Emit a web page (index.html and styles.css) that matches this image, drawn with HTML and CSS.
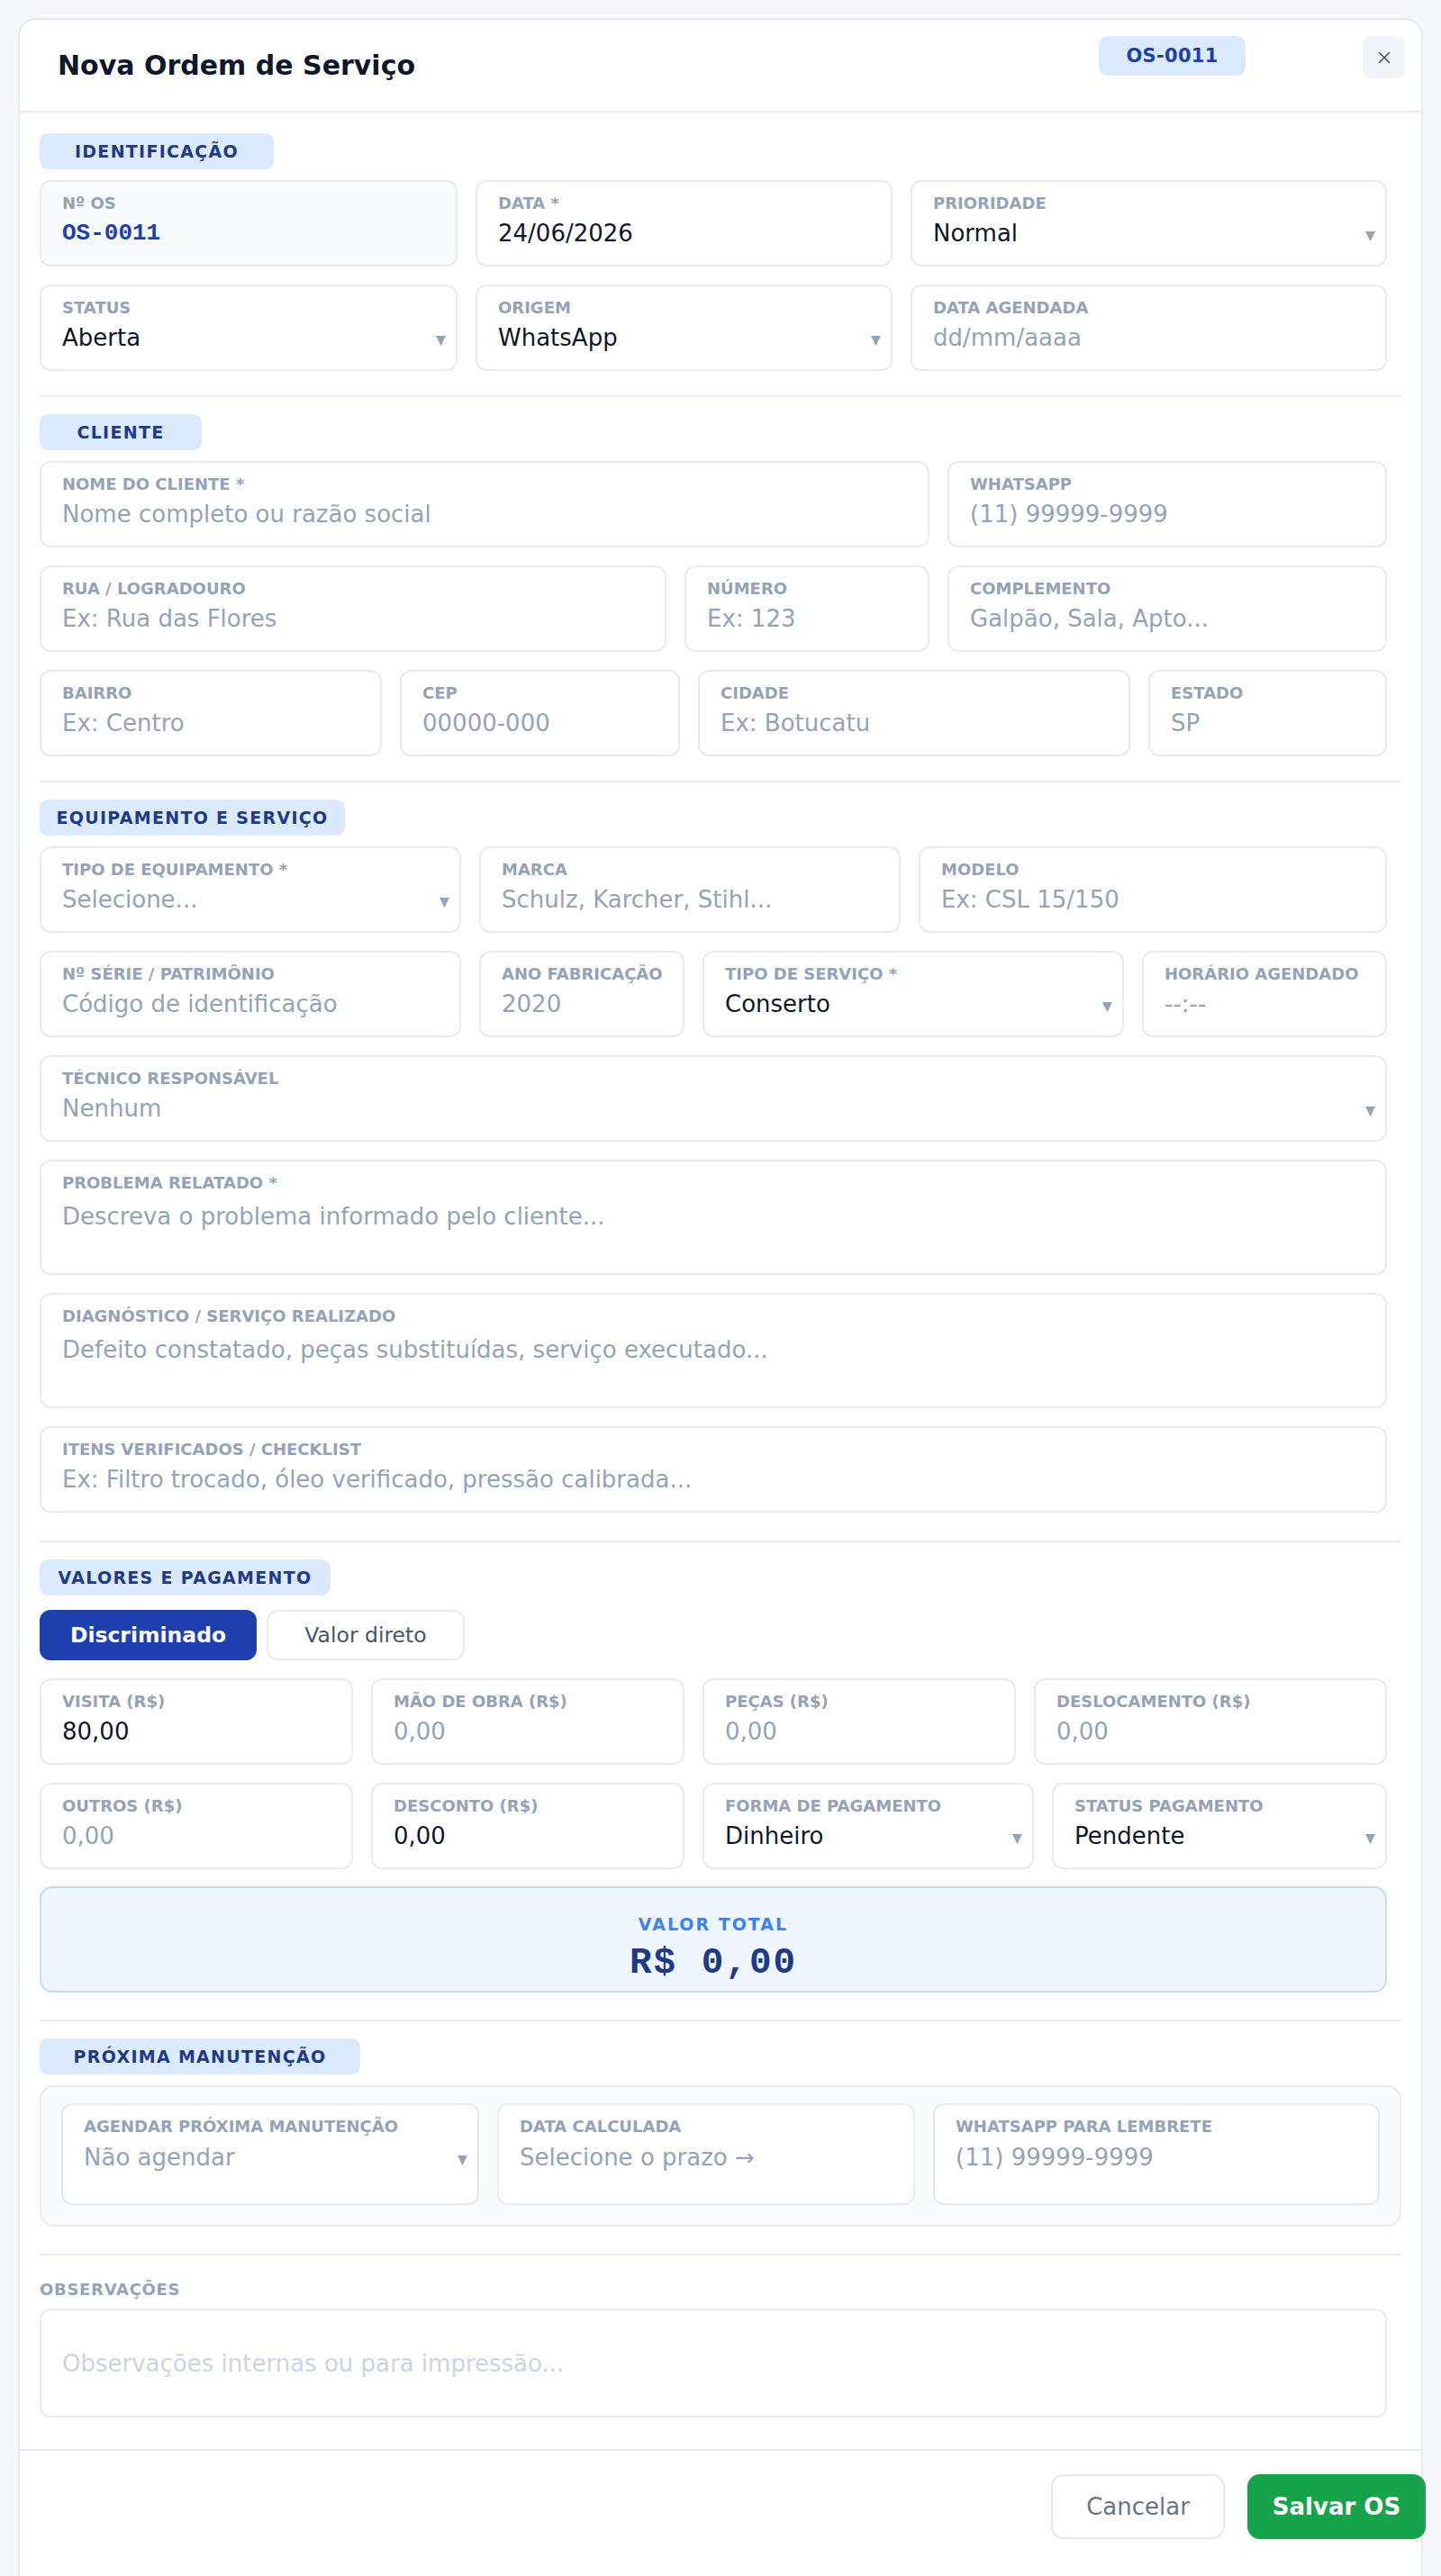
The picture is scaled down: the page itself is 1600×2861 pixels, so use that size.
FILE: index.html
```html
<!DOCTYPE html>
<html lang="pt-BR">
<head>
<meta charset="utf-8">
<title>Nova Ordem de Serviço</title>
<link rel="stylesheet" href="styles.css">
</head>
<body>
<div class="page">
  <div class="modal">
    <header class="modal-head">
      <h1 class="title">Nova Ordem de Serviço</h1>
      <div class="head-actions">
        <span class="os-badge">OS-0011</span>
        <button class="close" type="button" aria-label="Fechar">
          <svg width="14" height="14" viewBox="0 0 14 14"><path d="M1.5 1.5 L12.5 12.5 M12.5 1.5 L1.5 12.5" stroke="#475569" stroke-width="1.6" stroke-linecap="round" fill="none"/></svg>
        </button>
      </div>
    </header>

    <div class="modal-body">
      <section class="section s-ident">
        <div class="sec-tag tag-ident">IDENTIFICAÇÃO</div>
        <div class="row cols-ident">
          <div class="field field-ro"><span class="lbl">Nº OS</span><span class="val mono">OS-0011</span></div>
          <div class="field"><span class="lbl">DATA *</span><span class="val">24/06/2026</span></div>
          <div class="field"><span class="lbl">PRIORIDADE</span><span class="val">Normal<svg class="caret" viewBox="0 0 11 12"><path d="M0 1 H11 L5.5 12 Z"/></svg></span></div>
        </div>
        <div class="row cols-ident">
          <div class="field"><span class="lbl">STATUS</span><span class="val">Aberta<svg class="caret" viewBox="0 0 11 12"><path d="M0 1 H11 L5.5 12 Z"/></svg></span></div>
          <div class="field"><span class="lbl">ORIGEM</span><span class="val">WhatsApp<svg class="caret" viewBox="0 0 11 12"><path d="M0 1 H11 L5.5 12 Z"/></svg></span></div>
          <div class="field"><span class="lbl">DATA AGENDADA</span><span class="val ph">dd/mm/aaaa</span></div>
        </div>
      </section>

      <section class="section s-cli">
        <div class="sec-tag tag-cli">CLIENTE</div>
        <div class="row cols-cli1">
          <div class="field"><span class="lbl">NOME DO CLIENTE *</span><span class="val ph">Nome completo ou razão social</span></div>
          <div class="field"><span class="lbl">WHATSAPP</span><span class="val ph">(11) 99999-9999</span></div>
        </div>
        <div class="row cols-cli2">
          <div class="field"><span class="lbl">RUA / LOGRADOURO</span><span class="val ph">Ex: Rua das Flores</span></div>
          <div class="field"><span class="lbl">NÚMERO</span><span class="val ph">Ex: 123</span></div>
          <div class="field"><span class="lbl">COMPLEMENTO</span><span class="val ph">Galpão, Sala, Apto...</span></div>
        </div>
        <div class="row cols-cli3">
          <div class="field"><span class="lbl">BAIRRO</span><span class="val ph">Ex: Centro</span></div>
          <div class="field"><span class="lbl">CEP</span><span class="val ph">00000-000</span></div>
          <div class="field"><span class="lbl">CIDADE</span><span class="val ph">Ex: Botucatu</span></div>
          <div class="field"><span class="lbl">ESTADO</span><span class="val ph">SP</span></div>
        </div>
      </section>

      <section class="section s-equip">
        <div class="sec-tag tag-equip">EQUIPAMENTO E SERVIÇO</div>
        <div class="row cols-eq1">
          <div class="field"><span class="lbl">TIPO DE EQUIPAMENTO *</span><span class="val ph">Selecione...<svg class="caret" viewBox="0 0 11 12"><path d="M0 1 H11 L5.5 12 Z"/></svg></span></div>
          <div class="field"><span class="lbl">MARCA</span><span class="val ph">Schulz, Karcher, Stihl...</span></div>
          <div class="field"><span class="lbl">MODELO</span><span class="val ph">Ex: CSL 15/150</span></div>
        </div>
        <div class="row cols-eq2">
          <div class="field"><span class="lbl">Nº SÉRIE / PATRIMÔNIO</span><span class="val ph">Código de identificação</span></div>
          <div class="field"><span class="lbl">ANO FABRICAÇÃO</span><span class="val ph">2020</span></div>
          <div class="field"><span class="lbl">TIPO DE SERVIÇO *</span><span class="val">Conserto<svg class="caret" viewBox="0 0 11 12"><path d="M0 1 H11 L5.5 12 Z"/></svg></span></div>
          <div class="field"><span class="lbl">HORÁRIO AGENDADO</span><span class="val ph">--:--</span></div>
        </div>
        <div class="row">
          <div class="field"><span class="lbl">TÉCNICO RESPONSÁVEL</span><span class="val ph">Nenhum<svg class="caret" viewBox="0 0 11 12"><path d="M0 1 H11 L5.5 12 Z"/></svg></span></div>
        </div>
        <div class="row">
          <div class="field tall"><span class="lbl">PROBLEMA RELATADO *</span><span class="val ph">Descreva o problema informado pelo cliente...</span></div>
        </div>
        <div class="row">
          <div class="field tall"><span class="lbl">DIAGNÓSTICO / SERVIÇO REALIZADO</span><span class="val ph">Defeito constatado, peças substituídas, serviço executado...</span></div>
        </div>
        <div class="row">
          <div class="field"><span class="lbl">ITENS VERIFICADOS / CHECKLIST</span><span class="val ph">Ex: Filtro trocado, óleo verificado, pressão calibrada...</span></div>
        </div>
      </section>

      <section class="section s-val">
        <div class="sec-tag tag-val">VALORES E PAGAMENTO</div>
        <div class="toggle">
          <button class="tg tg-on" type="button">Discriminado</button>
          <button class="tg tg-off" type="button">Valor direto</button>
        </div>
        <div class="row cols-val1 after-toggle">
          <div class="field"><span class="lbl">VISITA (R$)</span><span class="val">80,00</span></div>
          <div class="field"><span class="lbl">MÃO DE OBRA (R$)</span><span class="val ph">0,00</span></div>
          <div class="field"><span class="lbl">PEÇAS (R$)</span><span class="val ph">0,00</span></div>
          <div class="field"><span class="lbl">DESLOCAMENTO (R$)</span><span class="val ph">0,00</span></div>
        </div>
        <div class="row cols-val2">
          <div class="field"><span class="lbl">OUTROS (R$)</span><span class="val ph">0,00</span></div>
          <div class="field"><span class="lbl">DESCONTO (R$)</span><span class="val">0,00</span></div>
          <div class="field"><span class="lbl">FORMA DE PAGAMENTO</span><span class="val">Dinheiro<svg class="caret" viewBox="0 0 11 12"><path d="M0 1 H11 L5.5 12 Z"/></svg></span></div>
          <div class="field"><span class="lbl">STATUS PAGAMENTO</span><span class="val">Pendente<svg class="caret" viewBox="0 0 11 12"><path d="M0 1 H11 L5.5 12 Z"/></svg></span></div>
        </div>
        <div class="total">
          <div class="total-lbl">VALOR TOTAL</div>
          <div class="total-val">R$ 0,00</div>
        </div>
      </section>

      <section class="section s-prox">
        <div class="sec-tag tag-prox">PRÓXIMA MANUTENÇÃO</div>
        <div class="panel">
          <div class="row cols-prox">
            <div class="field mid"><span class="lbl">AGENDAR PRÓXIMA MANUTENÇÃO</span><span class="val ph">Não agendar<svg class="caret" viewBox="0 0 11 12"><path d="M0 1 H11 L5.5 12 Z"/></svg></span></div>
            <div class="field mid"><span class="lbl">DATA CALCULADA</span><span class="val ph">Selecione o prazo →</span></div>
            <div class="field mid"><span class="lbl">WHATSAPP PARA LEMBRETE</span><span class="val ph">(11) 99999-9999</span></div>
          </div>
        </div>
      </section>

      <section class="section s-obs">
        <div class="obs-lbl">OBSERVAÇÕES</div>
        <div class="obs-box">Observações internas ou para impressão...</div>
      </section>
    </div>

    <footer class="modal-foot">
      <div class="foot-actions">
        <button class="btn btn-cancel" type="button">Cancelar</button>
        <button class="btn btn-save" type="button">Salvar OS</button>
      </div>
    </footer>
  </div>
</div>
</body>
</html>
```

FILE: styles.css
```css
* { box-sizing: border-box; }
html, body { margin: 0; padding: 0; }
body {
  background: #f5f7fa;
  font-family: "DejaVu Sans", "Noto Sans", sans-serif;
  color: #0f172a;
}
.page {
  height: 2861px;
  overflow: hidden;
  padding: 20px 20px 0;
}
.modal {
  background: #fff;
  border: 2px solid #e6ebf1;
  border-radius: 20px;
}

/* header */
.modal-head {
  height: 103px;
  display: flex;
  align-items: center;
  padding: 0 18px 0 42px;
  border-bottom: 2px solid #e6ebf1;
}
.title {
  flex: 1;
  margin: 0;
  font-size: 30px;
  line-height: 36px;
  font-weight: 700;
  color: #0f172a;
}
.head-actions {
  align-self: flex-start;
  display: flex;
  align-items: flex-start;
  padding-top: 18px;
}
.os-badge {
  width: 163px;
  height: 44px;
  margin-right: 130px;
  border-radius: 10px;
  background: #dbeafe;
  color: #1e40af;
  font-size: 21px;
  font-weight: 700;
  line-height: 44px;
  text-align: center;
  letter-spacing: 0.3px;
}
.close {
  width: 47px;
  height: 47px;
  padding: 0;
  border: 0;
  border-radius: 10px;
  background: #f1f5f9;
  display: flex;
  align-items: center;
  justify-content: center;
}

/* body */
.modal-body { padding: 23px 22px 0; }
.section {
  padding-bottom: 27px;
  border-bottom: 2px solid #e6ebf1;
}
.section + .section { padding-top: 19px; }
.s-equip { padding-bottom: 31px; }
.s-val { padding-bottom: 30px; }
.s-prox { padding-bottom: 30px; }
.s-obs { padding-top: 27px !important; padding-bottom: 35px; border-bottom: 0; }

.sec-tag {
  height: 40px;
  margin-bottom: 12px;
  border-radius: 9px;
  background: #dbeafe;
  color: #1e3a8a;
  font-size: 19px;
  font-weight: 700;
  line-height: 40px;
  letter-spacing: 1.3px;
  text-align: center;
  white-space: nowrap;
}
.tag-ident { width: 260px; }
.tag-cli { width: 180px; }
.tag-equip { width: 339px; }
.tag-val { width: 323px; }
.tag-prox { width: 356px; }

/* rows & fields */
.row {
  display: grid;
  grid-template-columns: 1fr;
  column-gap: 20px;
  margin-right: 16px;
}
.row + .row { margin-top: 20px; }
.cols-ident { grid-template-columns: 464px 463px 1fr; }
.cols-cli1 { grid-template-columns: 988px 1fr; }
.cols-cli2 { grid-template-columns: 696px 272px 1fr; }
.cols-cli3 { grid-template-columns: 380px 311px 480px 1fr; }
.cols-eq1 { grid-template-columns: 468px 468px 1fr; }
.cols-eq2 { grid-template-columns: 468px 228px 468px 1fr; }
.cols-val1 { grid-template-columns: 348px 348px 348px 1fr; }
.cols-val2 { grid-template-columns: 348px 348px 368px 1fr; }
.cols-prox { grid-template-columns: 464px 464px 1fr; margin-right: 0; }

.field {
  min-width: 0;
  height: 96px;
  padding: 13px 11px 0 23px;
  border: 2px solid #e6ebf1;
  border-radius: 12px;
  background: #fff;
  overflow: hidden;
}
.field-ro { background: #f8fafc; }
.field.tall { height: 128px; }
.field.mid { height: 113px; }
.lbl {
  display: block;
  font-size: 18px;
  font-weight: 700;
  line-height: 22px;
  color: #94a3b8;
  white-space: nowrap;
}
.val {
  display: flex;
  align-items: center;
  justify-content: space-between;
  margin-top: 6px;
  font-size: 26px;
  line-height: 32px;
  color: #0f172a;
  white-space: nowrap;
}
.field.tall .val { margin-top: 10px; }
.field.mid .val { margin-top: 7px; }
.ph { color: #94a3b8; }
.mono {
  font-family: "Liberation Mono", monospace;
  font-weight: 700;
  color: #1e40af;
}
.caret {
  flex: none;
  width: 11px;
  height: 12px;
  margin-top: 6px;
  fill: #94a3b8;
}

/* valores */
.toggle {
  display: flex;
  gap: 11px;
  margin-top: 16px;
}
.tg {
  height: 56px;
  border-radius: 12px;
  font-family: inherit;
  font-size: 23.5px;
  padding: 0;
}
.tg-on {
  width: 241px;
  border: 0;
  background: #1e40af;
  color: #fff;
  font-weight: 700;
}
.tg-off {
  width: 220px;
  border: 2px solid #e6ebf1;
  background: #fff;
  color: #475569;
}
.after-toggle { margin-top: 20px; }

.total {
  height: 118px;
  margin: 19px 16px 0 0;
  padding-top: 29px;
  border: 2px solid #bfdbfe;
  border-radius: 14px;
  background: #eff6ff;
  text-align: center;
}
.total-lbl {
  font-size: 19px;
  font-weight: 700;
  line-height: 23px;
  letter-spacing: 2px;
  color: #3b82f6;
}
.total-val {
  margin-top: 7px;
  font-family: "Liberation Mono", monospace;
  font-size: 41px;
  font-weight: 700;
  line-height: 48px;
  letter-spacing: 2px;
  color: #1e3a8a;
}

/* proxima */
.panel {
  padding: 18px 22px 22px;
  border: 2px solid #e6ebf1;
  border-radius: 16px;
  background: #f8fafc;
}

/* observacoes */
.obs-lbl {
  font-size: 18px;
  font-weight: 700;
  line-height: 22px;
  letter-spacing: 0.7px;
  color: #94a3b8;
}
.obs-box {
  height: 121px;
  margin: 10px 16px 0 0;
  padding: 43px 23px 0;
  border: 2px solid #e6ebf1;
  border-radius: 12px;
  font-size: 26px;
  line-height: 32px;
  color: #cbd5e1;
  white-space: nowrap;
}

/* footer */
.modal-foot {
  padding: 26px 0 80px;
  border-top: 2px solid #e6ebf1;
}
.foot-actions {
  display: flex;
  justify-content: flex-end;
  gap: 25px;
  margin-right: -5px;
}
.btn {
  height: 72px;
  padding: 0;
  border-radius: 14px;
  font-family: inherit;
  font-size: 26px;
}
.btn-cancel {
  width: 193px;
  border: 2px solid #e2e8f0;
  background: #fff;
  color: #64748b;
}
.btn-save {
  width: 198px;
  border: 0;
  background: #16a34a;
  color: #fff;
  font-weight: 700;
}
```
